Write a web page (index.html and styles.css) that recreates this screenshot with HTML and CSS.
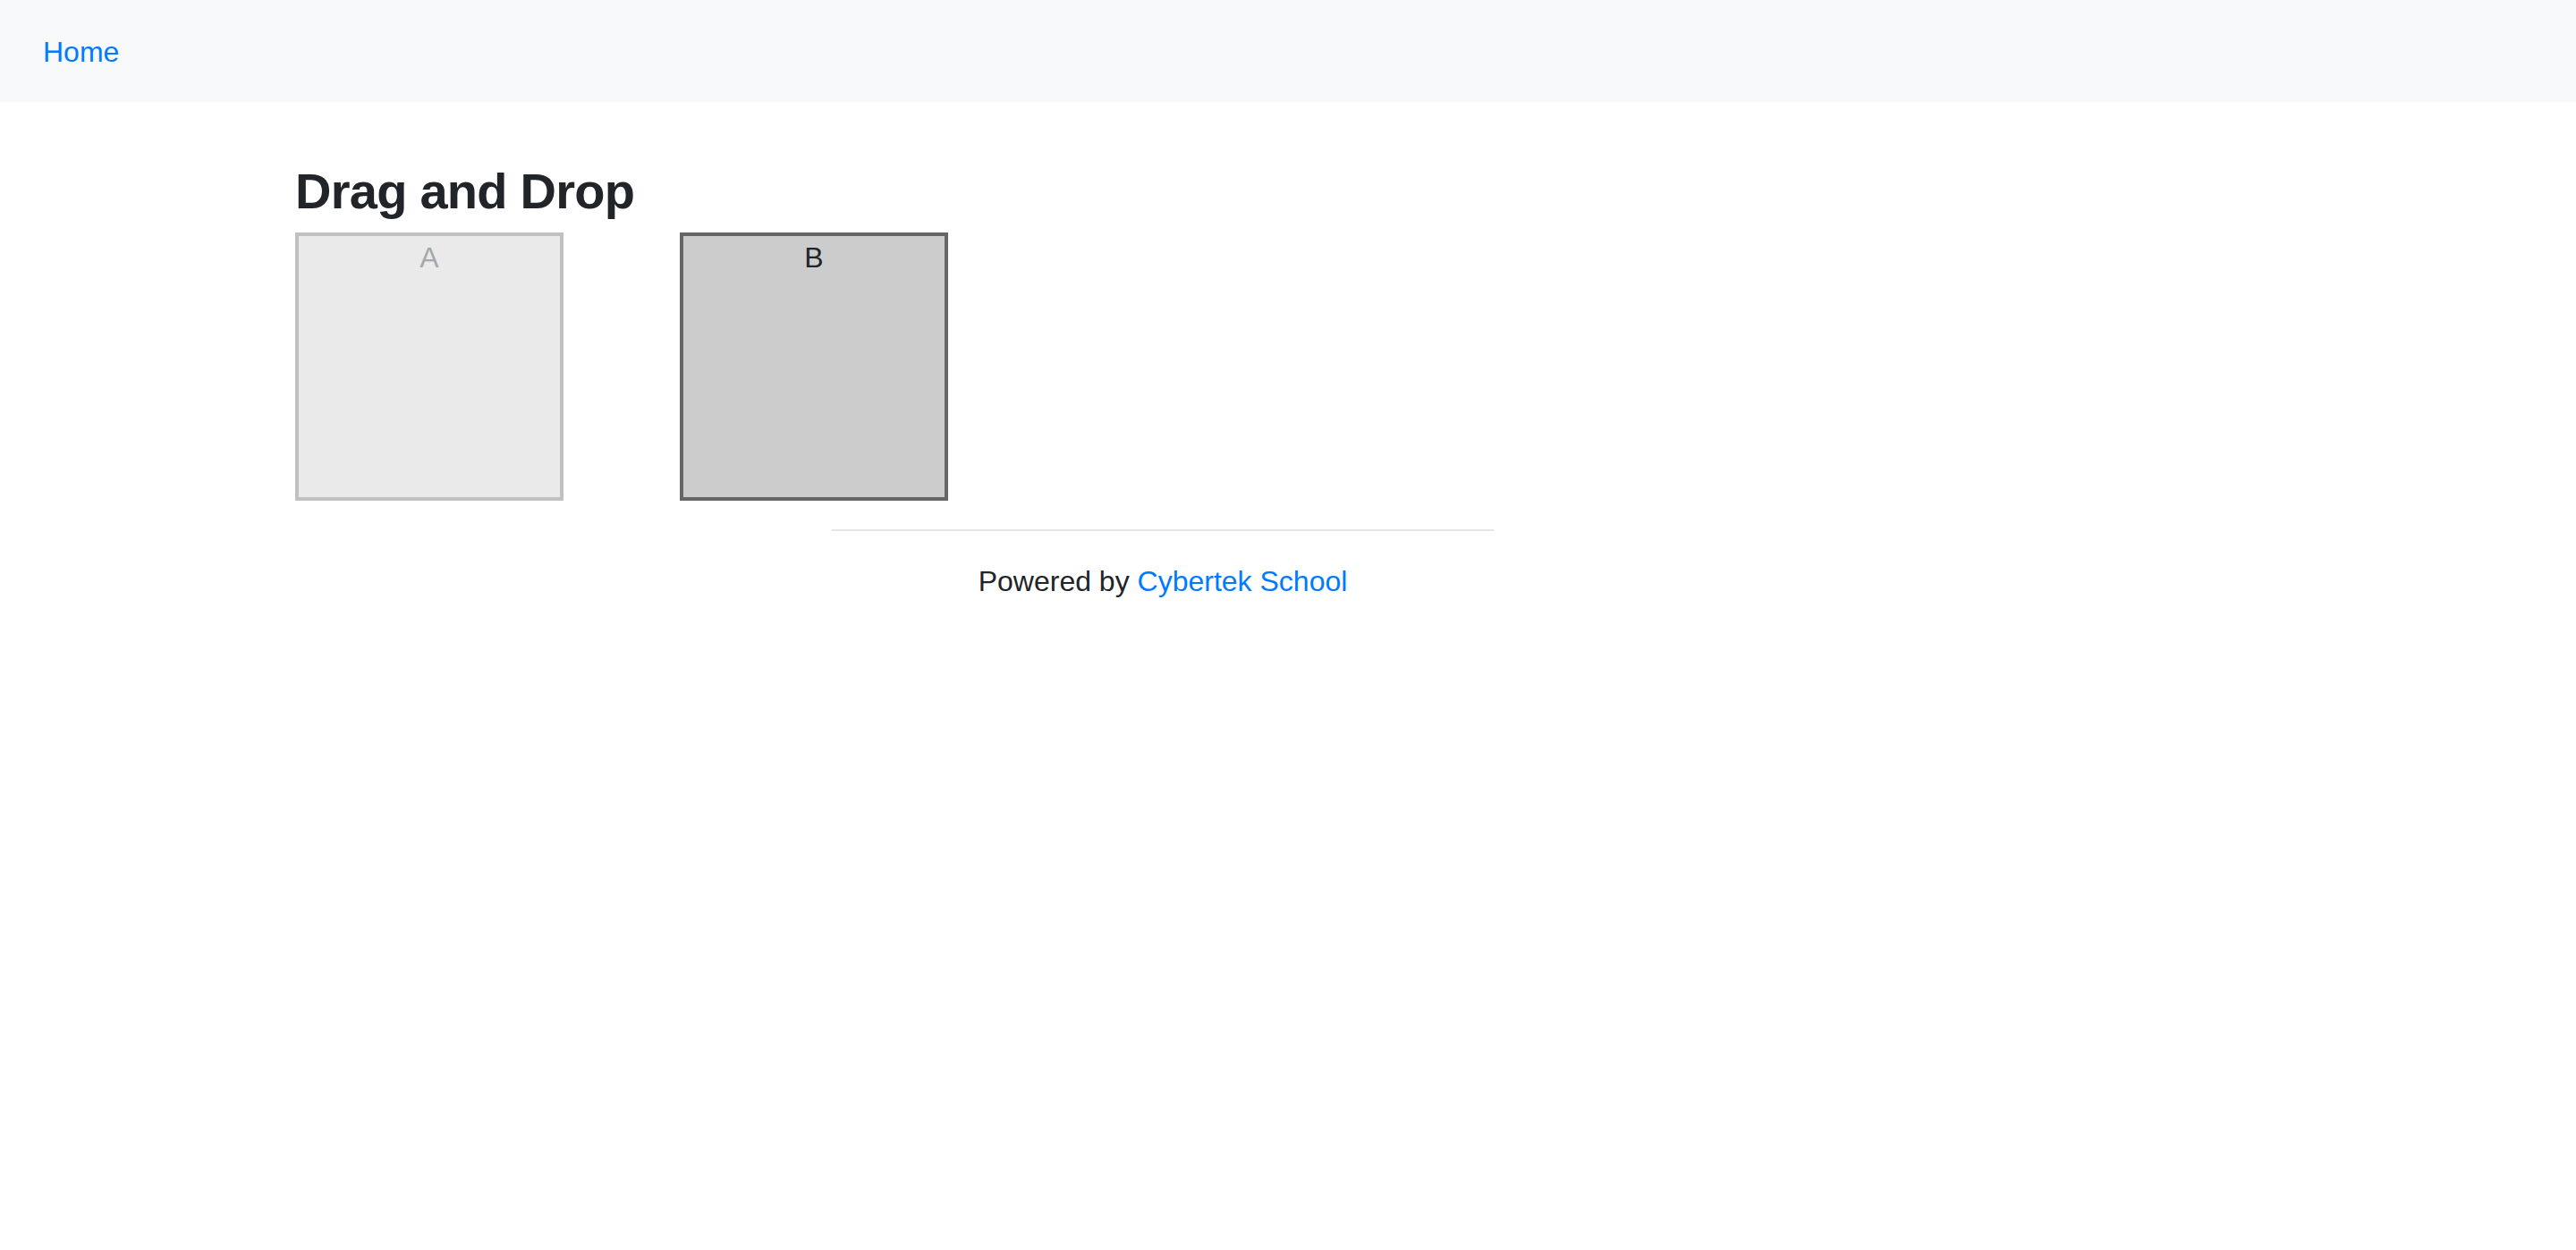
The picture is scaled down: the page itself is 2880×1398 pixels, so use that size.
FILE: index.html
```html
<!DOCTYPE html>
<html lang="en">
<head>
<meta charset="utf-8">
<title>Drag and Drop</title>
<link rel="stylesheet" href="styles.css">
</head>
<body>
<nav class="navbar">
  <a class="nav-link" href="#">Home</a>
</nav>
<main class="container">
  <h3 class="title">Drag and Drop</h3>
  <div class="columns">
    <div class="column column-dragging"><header>A</header></div>
    <div class="column"><header>B</header></div>
  </div>
  <div class="page-footer">
    <hr class="rule">
    <div class="powered">Powered by <a href="#" class="footer-link">Cybertek School</a></div>
  </div>
</main>
</body>
</html>
```

FILE: styles.css
```css
* { box-sizing: border-box; }
html, body { margin: 0; padding: 0; }
body {
  font-family: "Liberation Sans", Arial, sans-serif;
  font-size: 32px;
  line-height: 1.5;
  color: #212529;
  background: #fff;
}
.navbar {
  background: #f8f9fa;
  height: 114px;
  padding: 34px 48px 32px;
  display: flex;
  align-items: flex-start;
}
.nav-link {
  color: #007bff;
  text-decoration: none;
  line-height: 48px;
}
.container {
  max-width: 2280px;
  margin: 0 auto;
  padding: 66px 30px 0;
}
.title {
  margin: 0 0 13px;
  font-size: 56px;
  font-weight: bold;
  line-height: 1.2;
  letter-spacing: -0.75px;
}
.columns {
  display: flex;
  gap: 130px;
}
.column {
  width: 300px;
  height: 300px;
  border: 4px solid #666;
  background: #ccc;
  text-align: center;
}
.column-dragging { opacity: 0.4; }
.page-footer {
  margin-left: 600px;
  width: 740px;
  text-align: center;
}
.rule {
  margin: 32px 0;
  border: 0;
  border-top: 2px solid rgba(0, 0, 0, 0.1);
  height: 0;
}
.footer-link {
  color: #007bff;
  text-decoration: none;
}
```
